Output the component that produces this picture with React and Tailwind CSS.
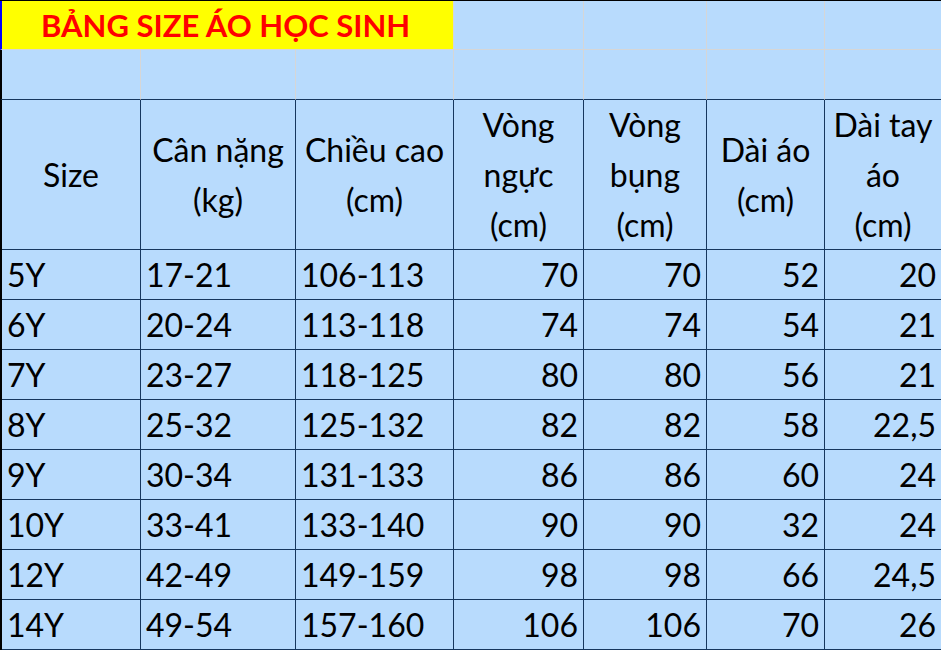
const cols = 'grid grid-cols-[140px_155px_158px_130px_123px_118px_117px]'
const bodyCols = 'grid grid-cols-[138px_155px_158px_130px_123px_118px_117px]'

const rows = [
  ['5Y', '17-21', '106-113', '70', '70', '52', '20'],
  ['6Y', '20-24', '113-118', '74', '74', '54', '21'],
  ['7Y', '23-27', '118-125', '80', '80', '56', '21'],
  ['8Y', '25-32', '125-132', '82', '82', '58', '22,5'],
  ['9Y', '30-34', '131-133', '86', '86', '60', '24'],
  ['10Y', '33-41', '133-140', '90', '90', '32', '24'],
  ['12Y', '42-49', '149-159', '98', '98', '66', '24,5'],
  ['14Y', '49-54', '157-160', '106', '106', '70', '26'],
]

const headers = [
  ['Size'],
  ['Cân nặng', '(kg)'],
  ['Chiều cao', '(cm)'],
  ['Vòng', 'ngực', '(cm)'],
  ['Vòng', 'bụng', '(cm)'],
  ['Dài áo', '(cm)'],
  ['Dài tay', 'áo', '(cm)'],
]

export default function App() {
  return (
    <div className="w-[941px] h-[650px] overflow-hidden bg-white font-['Lato',sans-serif] text-black">
      <div className="border-t border-black bg-[#b8dbfd]">
        {/* top blank rows */}
        <div className={cols}>
          <div className="col-span-3 h-[49px] bg-[#ffff00] border-l-2 border-l-[#0000ff] border-b border-b-[#d6d6d6] flex items-center pl-[39px]">
            <span className="text-[31px] font-bold text-[#ff0000] leading-none">BẢNG SIZE ÁO HỌC SINH</span>
          </div>
          {[0, 1, 2, 3].map((i) => (
            <div key={i} className="h-[49px] border-l border-b border-[#d6d6d6]" />
          ))}
          {[0, 1, 2, 3, 4, 5, 6].map((i) => (
            <div
              key={i}
              className={`h-[50px] border-b border-b-[#17375e] ${i === 0 ? 'border-l-2 border-l-black' : 'border-l border-l-[#d6d6d6]'}`}
            />
          ))}
        </div>

        {/* header */}
        <div className={`${bodyCols} border-l-2 border-l-black`}>
          {headers.map((h, i) => (
            <div
              key={i}
              className={`h-[150px] border-b border-[#17375e] flex flex-col justify-center items-center text-[32px] leading-[50px] ${i > 0 ? 'border-l' : ''}`}
            >
              {h.map((line) => (
                <span key={line}>{line}</span>
              ))}
            </div>
          ))}
        </div>

        {/* data */}
        {rows.map((r) => (
          <div key={r[0]} className={`${bodyCols} border-l-2 border-l-black`}>
            {r.map((v, i) => (
              <div
                key={i}
                className={`h-[50px] border-b border-[#17375e] flex items-center text-[32px] leading-none ${i > 0 ? 'border-l' : ''} ${i < 3 ? 'justify-start pl-[5px]' : 'justify-end pr-[5px]'}`}
              >
                {v}
              </div>
            ))}
          </div>
        ))}
      </div>
    </div>
  )
}
